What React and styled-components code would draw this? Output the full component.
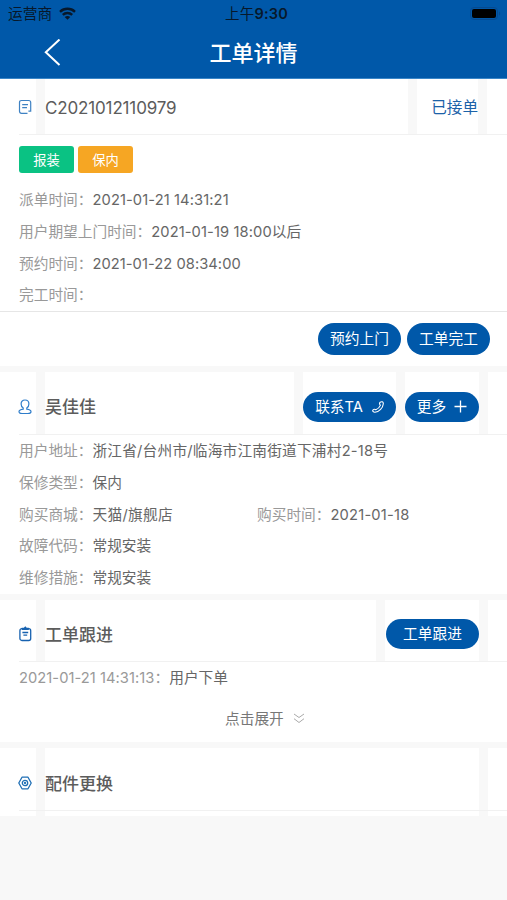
import React from 'react';
import styled, { createGlobalStyle } from 'styled-components';

const GlobalStyle = createGlobalStyle`
    * { box-sizing: border-box; }
    body {
        margin: 0;
        background: #f8f8f8;
        font-family: Inter, "Noto Sans CJK SC", sans-serif;
        font-size: 14.7px;
        color: #666;
    }
    svg { display: block; flex: none; }
`;
const Page = styled.div`
    width: 507px;
    height: 900px;
    overflow: hidden;
`;
const Header = styled.header`
    height: 79px;
    background: #0058a9;
    border-bottom: 1px solid #3a86c8;
`;
const StatusBar = styled.div`
    height: 28px;
    padding: 0 5px 0 8px;
    display: grid;
    grid-template-columns: 1fr auto 1fr;
    align-items: center;
    color: #07182b;
    font-size: 14.7px;
    line-height: 28px;
`;
const Carrier = styled.div`
    display: flex;
    align-items: center;
    gap: 7px;

    svg {
        margin-bottom: 2px;
    }
`;
const Clock = styled.div`
    font-size: 14.5px;
    letter-spacing: 0.2px;
    margin-left: 3px;

    b {
        font-weight: 600;
    }
`;
const Battery = styled.div`
    display: flex;
    justify-content: flex-end;
    margin-bottom: 2px;
`;
const NavBar = styled.div`
    height: 50px;
    padding: 0 44px;
    display: grid;
    grid-template-columns: 18px 1fr 18px;
    align-items: center;
`;
const Title = styled.h1`
    margin: 0;
    text-align: center;
    color: #fff;
    font-size: 22px;
    font-weight: 500;
    line-height: 48px;
`;
const Card = styled.section`
    background: #fff;
    height: ${(p) => p.$height}px;
    margin-bottom: 6px;
`;
const CardHead = styled.div`
    height: ${(p) => p.$height}px;
    display: grid;
    grid-template-columns: ${(p) => p.$columns};
    column-gap: 9px;
    background: #f8f8f8;
`;
const Cell = styled.div`
    background: #fff;
    display: flex;
    align-items: center;
    justify-content: ${(p) => p.$justify || 'flex-start'};
    padding-left: ${(p) => p.$left || 0}px;
    padding-top: ${(p) => p.$top || 0}px;
`;
const Heading = styled.h2`
    margin: 0;
    font-size: 17px;
    line-height: 24px;
    font-weight: ${(p) => (p.$thin ? 400 : 500)};
    letter-spacing: ${(p) => p.$spacing || 0}px;
    color: #5c5c5c;
`;
const Status = styled.span`
    color: #1c62a8;
    font-size: 15.6px;
    line-height: 24px;
`;
const Divider = styled.div`
    height: 1px;
    border-left: ${(p) => p.$left || 0}px solid #fff;
    background: ${(p) => p.$color || '#f1f1f1'};
`;
const Tags = styled.div`
    display: flex;
    gap: 4px;
    padding: 11px 19px 0;
`;
const Tag = styled.span`
    width: 55px;
    height: 27px;
    border-radius: 3px;
    background: ${(p) => p.$color};
    color: #fff;
    font-size: 13.3px;
    line-height: 28px;
    text-align: center;
`;
const Rows = styled.div`
    height: ${(p) => (p.$height ? `${p.$height}px` : 'auto')};
    padding: ${(p) => p.$top}px 19px 0;
`;
const Row = styled.div`
    height: 31.75px;
    display: grid;
    grid-template-columns: ${(p) => (p.$split ? '238px 1fr' : '1fr')};
    line-height: 31.75px;
    white-space: nowrap;
`;
const Label = styled.span`
    color: #999;
    letter-spacing: ${(p) => p.$spacing || 0}px;
`;
const Value = styled.span`
    color: #666;
    letter-spacing: ${(p) => p.$spacing || 0}px;
`;
const Actions = styled.div`
    display: flex;
    justify-content: flex-end;
    gap: 6px;
    padding: 11px 17px 0;
`;
const Button = styled.button`
    width: ${(p) => p.$width}px;
    height: ${(p) => p.$height || 30}px;
    flex: none;
    border: 0;
    padding: 0;
    border-radius: 16px;
    background: #0058a9;
    color: #fff;
    font: inherit;
    line-height: 20px;
    display: flex;
    align-items: center;
    justify-content: center;
    gap: ${(p) => p.$gap || 0}px;
    cursor: pointer;
`;
const Expand = styled.div`
    display: flex;
    align-items: center;
    gap: 9px;
    padding: 13px 0 0 225px;
    line-height: 22px;
    color: #777;
`;

const WifiIcon = () => (
    <svg width="17" height="13" viewBox="0 0 17 13" fill="none" stroke="#07182b" strokeWidth="2.4">
        <path d="M1 4.8C5.2.8 11.8.8 16 4.8" />
        <path d="M3.8 7.9C6.4 5.4 10.6 5.4 13.2 7.9" />
        <path d="M8.5 12.8 5.7 10C7.4 8.5 9.6 8.5 11.3 10Z" fill="#07182b" stroke="none" />
    </svg>
);
const BatteryIcon = () => (
    <svg width="33" height="15" viewBox="0 0 33 15">
        <rect x="1.5" y="1.5" width="27" height="12" rx="3.5" fill="none" stroke="#064a90" />
        <rect x="3" y="3" width="24" height="9" rx="2" fill="#000" />
        <path d="M30 5.5c1.6.7 1.6 3.3 0 4Z" fill="#064a90" />
    </svg>
);
const BackIcon = () => (
    <svg width="18" height="28" viewBox="0 0 18 28" fill="none" stroke="#fff" strokeWidth="2">
        <path d="M15.5.5 1.8 13.3l13.7 12.8" />
    </svg>
);
const OrderIcon = () => (
    <svg width="14" height="16" viewBox="0 0 14 16" fill="none" stroke="#3f82c3" strokeWidth="1.2">
        <path d="M9.5 14.3H3.5Q1.5 14.3 1.5 12.3V3.5Q1.5 1.5 3.5 1.5H10.7Q12.7 1.5 12.7 3.5V12.2H10.4M4.2 5.6H10M4.2 8.6H9" />
    </svg>
);
const UserIcon = () => (
    <svg width="14" height="16" viewBox="0 0 14 16" fill="none" stroke="#2f7dca" strokeWidth="1.2">
        <path d="M5.2 9C3.6 7.8 3.1 6.5 3.1 4.9 3.1 2.5 4.7 1 7 1s3.9 1.5 3.9 3.9c0 1.6-.5 2.9-2.1 4.1v1.2c2.6.4 4.2 1.2 4.2 2.6 0 1.2-1.4 1.7-3 1.7H4c-1.6 0-3-.5-3-1.7 0-1.4 1.6-2.2 4.2-2.6Z" />
    </svg>
);
const ClipboardIcon = () => (
    <svg width="14" height="16" viewBox="0 0 14 16" fill="none" stroke="#1762b0" strokeWidth="1.3">
        <rect x="1.9" y="2.7" width="10.8" height="11.8" rx="2" />
        <path d="M4.4 3.3V2.4h1.7L7.3 1.2l1.2 1.2h1.7v.9ZM4.4 6.5h5.8M5.4 9.2h3.8" />
    </svg>
);
const PartsIcon = () => (
    <svg width="14" height="14" viewBox="0 0 14 14" fill="none" stroke="#1f6fb5" strokeWidth="1.3">
        <path d="M4 1.2h6L13.2 7 10 12.8H4L.8 7Z" strokeLinejoin="round" />
        <circle cx="7" cy="7" r="2.7" />
        <circle cx="7" cy="7" r=".5" />
    </svg>
);
const PhoneIcon = () => (
    <svg width="12" height="12" viewBox="0 0 12 12" fill="none" stroke="#fff" strokeWidth="1.1" strokeLinejoin="round">
        <path d="M8.2 1.2C9.6.2 11.4.8 11.3 2.7 11 6.8 7.2 10.9 3 11.2 1.5 11.3.5 10.3.8 9.2 1.3 8.2 2.8 8 3.8 8.8 5.8 8 7.6 6.2 8.4 4.4 7.5 3.3 7.3 2 8.2 1.2Z" />
    </svg>
);
const PlusIcon = () => (
    <svg width="13" height="13" viewBox="0 0 13 13" stroke="#fff" strokeWidth="1.3">
        <path d="M6.5.5v12M.5 6.5h12" />
    </svg>
);
const DoubleDownIcon = () => (
    <svg width="12" height="11" viewBox="0 0 12 11" fill="none" stroke="#aaa" strokeWidth="1">
        <path d="m1 1 5 3.5L11 1M1 5.7l5 3.8 5-3.8" />
    </svg>
);

// full-width colon
const COLON = '\uFF1A';

const dispatchRows = [
    { label: '派单时间', value: '2021-01-21 14:31:21', spacing: 0.1 },
    { label: '用户期望上门时间', value: '2021-01-19 18:00以后', spacing: 0.1 },
    { label: '预约时间', value: '2021-01-22 08:34:00', spacing: 0.05 },
    { label: '完工时间', value: '' },
];

const Field = ({ label, value, spacing }) => (
    <div>
        <Label>{label + COLON}</Label>
        <Value $spacing={spacing}>{value}</Value>
    </div>
);

const App = () => (
    <Page lang="zh-CN">
        <GlobalStyle />
        <Header>
            <StatusBar>
                <Carrier>运营商 <WifiIcon /></Carrier>
                <Clock>上午<b>9:30</b></Clock>
                <Battery><BatteryIcon /></Battery>
            </StatusBar>
            <NavBar>
                <BackIcon />
                <Title>工单详情</Title>
            </NavBar>
        </Header>

        <Card $height={287}>
            <CardHead $height={55} $columns="36px 363px 61px 1fr">
                <Cell $left={18}><OrderIcon /></Cell>
                <Cell $top={2}><Heading $thin $spacing={-0.15}>C2021012110979</Heading></Cell>
                <Cell $justify="flex-end" $top={2}><Status>已接单</Status></Cell>
                <Cell />
            </CardHead>
            <Divider $left={19} />
            <Tags>
                <Tag $color="#0ac283">报装</Tag>
                <Tag $color="#f6a623">保内</Tag>
            </Tags>
            <Rows $top={12} $height={138}>
                {dispatchRows.map((item) => (
                    <Row key={item.label}><Field {...item} /></Row>
                ))}
            </Rows>
            <Divider $color="#e6e6e6" />
            <Actions>
                <Button $width={83} $height={32}>预约上门</Button>
                <Button $width={83} $height={32}>工单完工</Button>
            </Actions>
        </Card>

        <Card $height={222}>
            <CardHead $height={62} $columns="36px 249px 93px 74px 1fr">
                <Cell $left={18} $top={7}><UserIcon /></Cell>
                <Cell $top={8}><Heading>吴佳佳</Heading></Cell>
                <Cell $justify="flex-end" $top={7}><Button $width={93} $gap={9}>联系TA <PhoneIcon /></Button></Cell>
                <Cell $top={7}><Button $width={74} $gap={8}>更多 <PlusIcon /></Button></Cell>
                <Cell />
            </CardHead>
            <Divider $left={19} />
            <Rows $top={1}>
                <Row><Field label="用户地址" value="浙江省/台州市/临海市江南街道下浦村2-18号" spacing={0.2} /></Row>
                <Row><Field label="保修类型" value="保内" /></Row>
                <Row $split>
                    <Field label="购买商城" value="天猫/旗舰店" spacing={0.3} />
                    <Field label="购买时间" value="2021-01-18" spacing={0.2} />
                </Row>
                <Row><Field label="故障代码" value="常规安装" /></Row>
                <Row><Field label="维修措施" value="常规安装" /></Row>
            </Rows>
        </Card>

        <Card $height={142}>
            <CardHead $height={61} $columns="36px 331px 94px 1fr">
                <Cell $left={18} $top={6}><ClipboardIcon /></Cell>
                <Cell $top={8}><Heading>工单跟进</Heading></Cell>
                <Cell $top={6} $justify="flex-end"><Button $width={93}>工单跟进</Button></Cell>
                <Cell />
            </CardHead>
            <Divider $left={19} />
            <Rows $top={1}>
                <Row>
                    <div>
                        <Label $spacing={0.05}>{'2021-01-21 14:31:13' + COLON}</Label>
                        <Value>用户下单</Value>
                    </div>
                </Row>
            </Rows>
            <Expand>点击展开 <DoubleDownIcon /></Expand>
        </Card>

        <Card $height={68}>
            <CardHead $height={62} $columns="36px 434px 1fr">
                <Cell $left={18} $top={8}><PartsIcon /></Cell>
                <Cell $top={9}><Heading>配件更换</Heading></Cell>
                <Cell />
            </CardHead>
            <Divider $left={19} />
            <CardHead $height={5} $columns="36px 434px 1fr">
                <Cell />
                <Cell />
                <Cell />
            </CardHead>
        </Card>
    </Page>
);

export default App;
